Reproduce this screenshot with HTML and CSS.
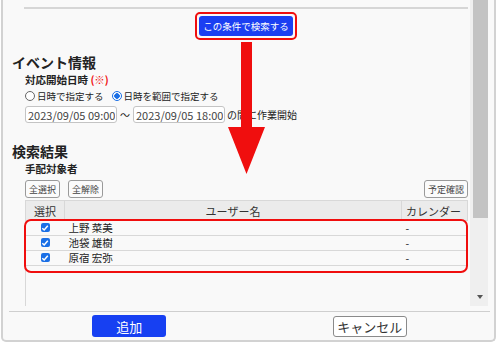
FILE: index.html
```html
<!DOCTYPE html>
<html lang="ja">
<head>
    <meta charset="UTF-8">
    <meta name="viewport" content="width=device-width, initial-scale=1.0">
    <title>手配対象者の追加</title>
    <link rel="stylesheet" href="styles.css">
</head>
<body>
    <div class="window">
        <div class="main">
            <div class="content">
                <div class="top-rule"></div>

                <!-- Search button (highlighted) -->
                <div class="search-row">
                    <div class="search-highlight">
                        <button class="search-btn">この条件で検索する</button>
                    </div>
                </div>

                <h2 class="section-title">イベント情報</h2>
                <div class="field">
                    <div class="field-label">対応開始日時 <span class="required">(※)</span></div>
                    <div class="radio-row">
                        <label class="radio"><span class="radio-mark"></span>日時で指定する</label>
                        <label class="radio"><span class="radio-mark checked"></span>日時を範囲で指定する</label>
                    </div>
                    <div class="range-row">
                        <input class="date-input" type="text" value="2023/09/05 09:00">
                        <span class="tilde">～</span>
                        <input class="date-input" type="text" value="2023/09/05 18:00">
                        <span class="range-note">の間に作業開始</span>
                    </div>
                </div>

                <h2 class="section-title second">検索結果</h2>
                <div class="field">
                    <div class="field-label">手配対象者</div>
                    <div class="toolbar">
                        <div class="toolbar-left">
                            <button class="small-btn">全選択</button>
                            <button class="small-btn">全解除</button>
                        </div>
                        <button class="small-btn">予定確認</button>
                    </div>
                    <div class="table-wrap">
                        <table class="user-table">
                            <thead>
                                <tr>
                                    <th class="col-select">選択</th>
                                    <th class="col-name">ユーザー名</th>
                                    <th class="col-cal">カレンダー</th>
                                </tr>
                            </thead>
                            <tbody id="user-rows"></tbody>
                        </table>
                        <div class="rows-highlight"></div>
                    </div>
                </div>

                <!-- Red arrow annotation -->
                <svg class="arrow-note" width="45" height="140" viewBox="0 0 45 140">
                    <polygon points="16,2 27,2 27,87 40,87 21.5,134 3,87 16,87" fill="#f00e0e"/>
                </svg>
            </div>

            <div class="scrollbar">
                <div class="scroll-thumb"></div>
                <span class="scroll-down"></span>
            </div>
        </div>

        <div class="footer">
            <div class="footer-cell"><button class="add-btn">追加</button></div>
            <div class="footer-cell"><button class="cancel-btn">キャンセル</button></div>
        </div>
    </div>

    <script>
        const users = ['上野 菜美', '池袋 雄樹', '原宿 宏弥'];   // Selected users

        function renderRows() {
            const rows = document.getElementById('user-rows');
            users.forEach(name => {
                const tr = document.createElement('tr');
                tr.innerHTML = `
                    <td class="col-select"><span class="check"><svg width="8" height="8" viewBox="0 0 8 8"><path d="M1.3 4.2 L3.2 6 L6.8 1.8" fill="none" stroke="#fff" stroke-width="1.5"/></svg></span></td>
                    <td class="col-name">${name}</td>
                    <td class="col-cal">-</td>
                `;
                rows.appendChild(tr);
            });
        }
        renderRows();
    </script>
</body>
</html>
```

FILE: styles.css
```css
body {
    margin: 0;
    padding: 0;
    background-color: #ffffff;
    font-family: "Noto Sans CJK JP", "Noto Sans", sans-serif;
    color: #222222;
}
button {
    padding: 0;
    font-family: inherit;
}
/* Dialog frame */
.window {
    box-sizing: border-box;
    width: 495px;
    height: 342px;
    margin-left: 1px;
    border: 2px solid #d2d2d2;
    border-top: none;
    border-radius: 0 0 5px 5px;
    background-color: #f9f9f9;
    display: flex;
    flex-direction: column;
}
.main {
    display: flex;
    height: 306px;
}
.content {
    position: relative;
    flex: 1;
    padding: 0 2px 0 9px;
    overflow: hidden;
}
.top-rule {
    margin: 7px 0 0 12px;
    border-top: 2px solid #d6d6d6;
}
/* Search button */
.search-row {
    display: flex;
    justify-content: center;
    margin: 3px 0 0 12px;
}
.search-highlight {
    border: 2px solid #f00e0e;
    border-radius: 5px;
    padding: 2px;
    display: flex;
}
.search-btn {
    height: 20px;
    width: 94px;
    border: none;
    border-radius: 3px;
    background-color: #1b3ff2;
    color: #ffffff;
    font-size: 9.5px;
}
.section-title {
    margin: 13px 0 0 0;
    font-size: 14px;
    line-height: 18px;
    font-weight: bold;
}
.section-title.second {
    margin-top: 19px;
}
.field {
    margin-left: 13px;
}
.field-label {
    margin-top: 3px;
    font-size: 10.5px;
    line-height: 12px;
    font-weight: bold;
}
.required {
    color: #f01010;
}
.radio-row {
    display: flex;
    gap: 8px;
    margin-top: 4px;
    font-size: 9.5px;
    line-height: 12px;
}
.radio {
    display: flex;
    align-items: center;
    gap: 2px;
}
.radio-mark {
    box-sizing: border-box;
    width: 10px;
    height: 10px;
    border: 1px solid #666666;
    border-radius: 50%;
    background-color: #ffffff;
}
.radio-mark.checked {
    border-color: #1a6fe6;
    background: radial-gradient(circle, #1a6fe6 0 2.5px, #ffffff 3px);
}
.range-row {
    display: flex;
    align-items: center;
    margin-top: 4px;
    font-size: 10px;
}
.date-input {
    box-sizing: border-box;
    width: 92px;
    height: 17px;
    padding: 0 1px 0 2px;
    border: 1px solid #c4c4c4;
    border-radius: 3px;
    background-color: #ffffff;
    color: #444444;
    font-family: inherit;
    font-size: 11px;
}
.tilde {
    width: 16px;
    text-align: center;
}
.range-note {
    margin-left: 2px;
}
/* Toolbar above the table */
.toolbar {
    display: flex;
    justify-content: space-between;
    margin-top: 5px;
}
.toolbar-left {
    display: flex;
    gap: 8px;
}
.small-btn {
    height: 18px;
    padding: 0 3px;
    border: 1px solid #9a9a9a;
    border-radius: 3px;
    background-color: #fbfbfb;
    color: #444444;
    font-size: 9px;
}
/* Results table */
.table-wrap {
    position: relative;
    height: 107px;
    margin-top: 2px;
    border-left: 1px solid #d8d8d8;
}
.user-table {
    width: 100%;
    border-collapse: collapse;
    font-size: 10.5px;
}
.user-table th {
    height: 19px;
    padding: 0;
    background-color: #ebebeb;
    border: 1px solid #d8d8d8;
    border-left: none;
    font-weight: normal;
    font-size: 11px;
    color: #333333;
}
.user-table td {
    height: 14px;
    padding: 0;
    border-bottom: 1px solid #d8d8d8;
    line-height: 14px;
}
.col-select {
    width: 38px;
    text-align: center;
}
.user-table td.col-name {
    padding-left: 4px;
}
.col-cal {
    width: 61px;
    text-align: left;
    padding-left: 4px !important;
}
.check {
    display: inline-flex;
    align-items: center;
    justify-content: center;
    width: 9px;
    height: 9px;
    margin-top: 2px;
    border-radius: 2px;
    background-color: #1a6fe6;
    vertical-align: top;
}
.rows-highlight {
    position: absolute;
    top: 19px;
    left: -2px;
    width: 444px;
    height: 54px;
    box-sizing: border-box;
    border: 2px solid #f00e0e;
    border-radius: 7px;
}
.arrow-note {
    position: absolute;
    left: 222px;
    top: 40px;
}
/* Scrollbar */
.scrollbar {
    width: 18px;
    margin-right: 6px;
    background-color: #efefef;
    display: flex;
    flex-direction: column;
    align-items: flex-end;
}
.scroll-thumb {
    width: 15px;
    height: 218px;
    background-color: #c3c3c3;
}
.scroll-down {
    margin: auto 5px 7px 0;
    width: 0;
    height: 0;
    border-left: 3.5px solid transparent;
    border-right: 3.5px solid transparent;
    border-top: 4px solid #555555;
}
/* Footer */
.footer {
    display: grid;
    grid-template-columns: 1fr 1fr;
    margin: 5px 4px 0 6px;
    padding-top: 3px;
    border-top: 1px solid #cfcfcf;
}
.footer-cell {
    display: flex;
    justify-content: center;
}
.add-btn {
    width: 74px;
    height: 22px;
    border: none;
    border-radius: 3px;
    background-color: #1740f2;
    color: #ffffff;
    font-size: 13px;
}
.cancel-btn {
    width: 74px;
    height: 21px;
    margin-top: 1px;
    border: 1px solid #8a8a8a;
    border-radius: 3px;
    background-color: #ffffff;
    color: #333333;
    font-size: 13px;
}
```
